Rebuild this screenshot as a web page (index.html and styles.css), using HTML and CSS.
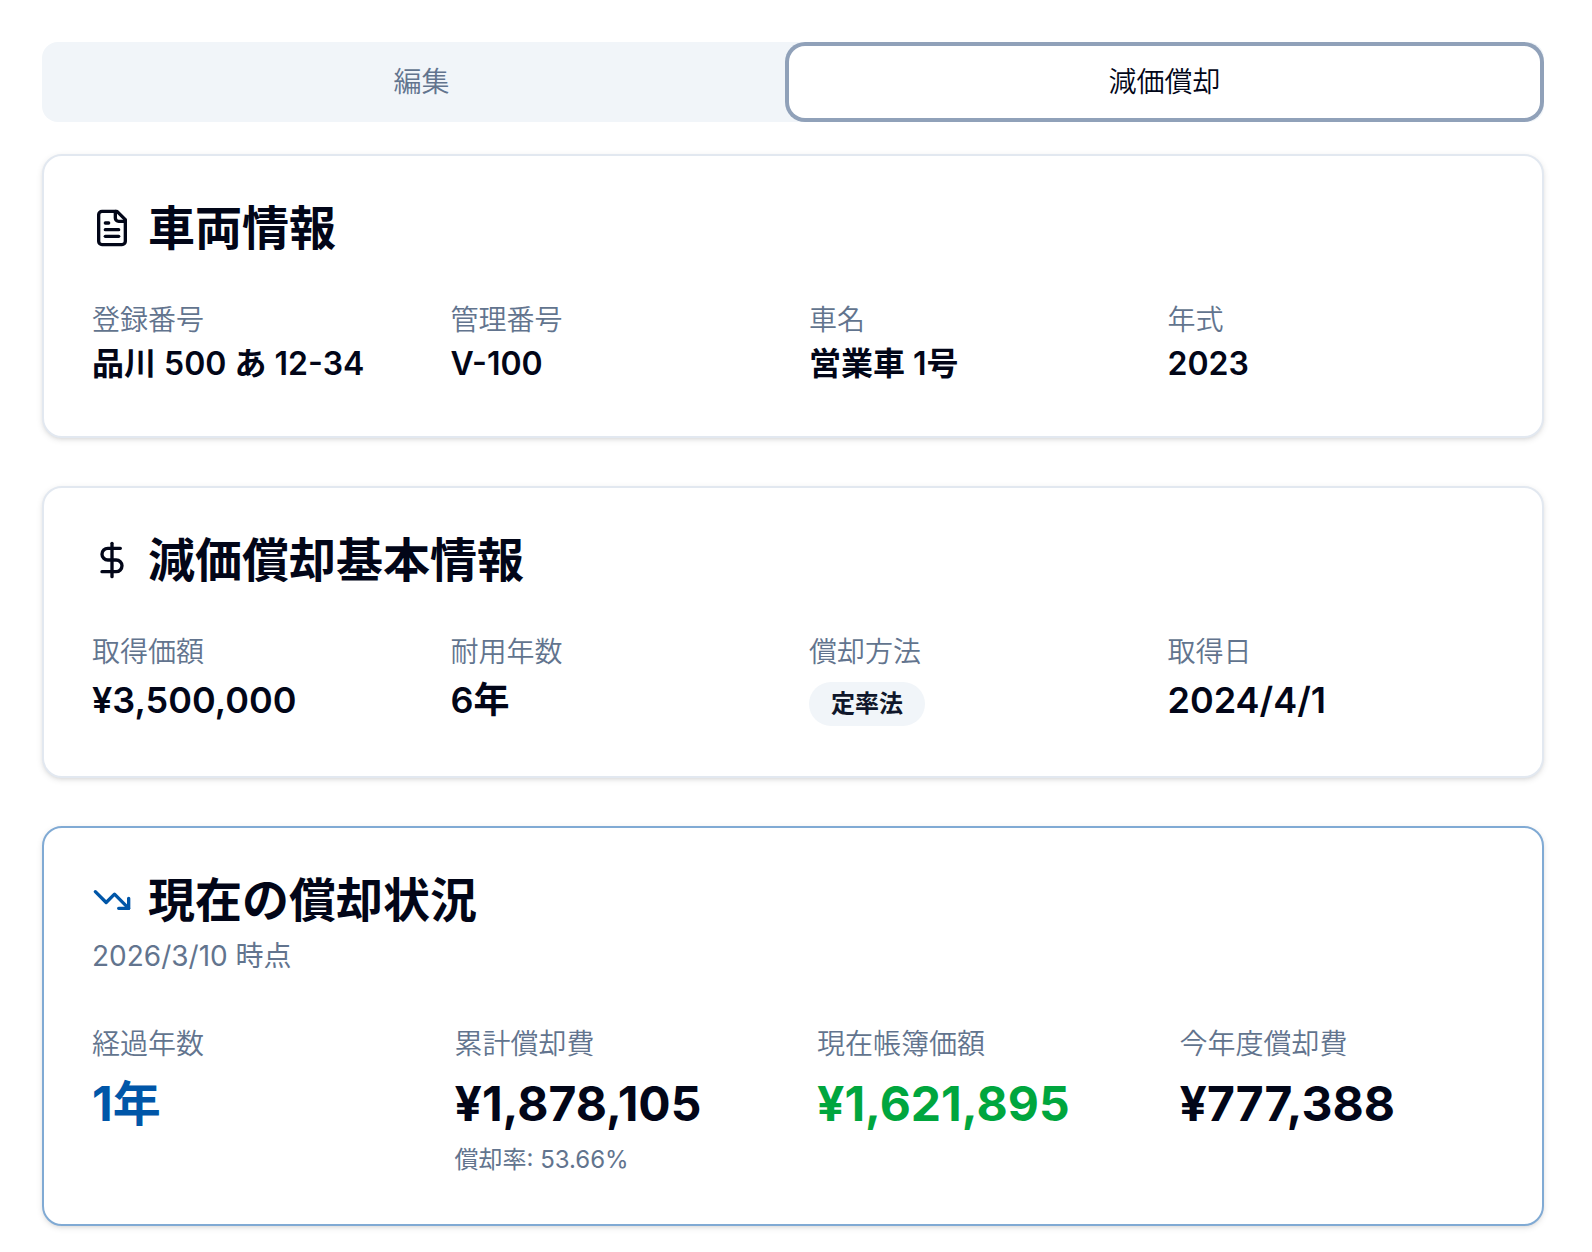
FILE: index.html
```html
<!DOCTYPE html>
<html lang="ja">
<head>
    <meta charset="UTF-8">
    <meta name="viewport" content="width=device-width, initial-scale=1.0">
    <title>減価償却</title>
    <link rel="stylesheet" href="styles.css">
</head>
<body>
    <div class="tabs" role="tablist">
        <button type="button" class="tab" role="tab" aria-selected="false">編集</button>
        <button type="button" class="tab active" role="tab" aria-selected="true">減価償却</button>
    </div>

    <main class="cards">
        <section class="card">
            <h2 class="card-title">
                <svg class="icon" viewBox="0 0 24 24" aria-hidden="true">
                    <path d="M15 2H6a2 2 0 0 0-2 2v16a2 2 0 0 0 2 2h12a2 2 0 0 0 2-2V7Z"/>
                    <path d="M14 2v4a2 2 0 0 0 2 2h4"/>
                    <path d="M10 9H8"/>
                    <path d="M16 13H8"/>
                    <path d="M16 17H8"/>
                </svg>
                車両情報
            </h2>
            <dl class="fields">
                <div>
                    <dt>登録番号</dt>
                    <dd>品川 500 あ 12-34</dd>
                </div>
                <div>
                    <dt>管理番号</dt>
                    <dd>V-100</dd>
                </div>
                <div>
                    <dt>車名</dt>
                    <dd>営業車 1号</dd>
                </div>
                <div>
                    <dt>年式</dt>
                    <dd>2023</dd>
                </div>
            </dl>
        </section>

        <section class="card">
            <h2 class="card-title">
                <svg class="icon" viewBox="0 0 24 24" aria-hidden="true">
                    <path d="M12 2v20"/>
                    <path d="M17 5H9.5a3.5 3.5 0 0 0 0 7h5a3.5 3.5 0 0 1 0 7H6"/>
                </svg>
                減価償却基本情報
            </h2>
            <dl class="fields medium">
                <div>
                    <dt>取得価額</dt>
                    <dd>¥3,500,000</dd>
                </div>
                <div>
                    <dt>耐用年数</dt>
                    <dd>6年</dd>
                </div>
                <div>
                    <dt>償却方法</dt>
                    <dd class="badge-row"><span class="badge">定率法</span></dd>
                </div>
                <div>
                    <dt>取得日</dt>
                    <dd>2024/4/1</dd>
                </div>
            </dl>
        </section>

        <section class="card primary">
            <h2 class="card-title">
                <svg class="icon" viewBox="0 0 24 24" aria-hidden="true">
                    <path d="M16 17h6v-6"/>
                    <path d="m22 17-8.500-8.500-5 5L2 7"/>
                </svg>
                現在の償却状況
            </h2>
            <p class="card-description">2026/3/10 時点</p>
            <dl class="fields large">
                <div>
                    <dt>経過年数</dt>
                    <dd class="blue">1年</dd>
                </div>
                <div>
                    <dt>累計償却費</dt>
                    <dd>¥1,878,105</dd>
                    <dd class="note">償却率: 53.66%</dd>
                </div>
                <div>
                    <dt>現在帳簿価額</dt>
                    <dd class="green">¥1,621,895</dd>
                </div>
                <div>
                    <dt>今年度償却費</dt>
                    <dd>¥777,388</dd>
                </div>
            </dl>
        </section>
    </main>
</body>
</html>
```

FILE: styles.css
```css
* {
    box-sizing: border-box;
}

body {
    margin: 0;
    padding: 42px 48px 26px 42px;
    font-family: Inter, "Noto Sans CJK JP", sans-serif;
    font-size: 28px;
    line-height: 40px;
    color: #020618;
    background-color: #fff;
}

h2, p, dl, dd {
    margin: 0;
}

.tabs {
    display: grid;
    grid-template-columns: 1fr 1fr;
    padding: 8px;
    margin-bottom: 32px;
    border-radius: 16px;
    background-color: #f1f5f9;
}

.tab {
    height: 64px;
    padding: 12px 24px;
    border: none;
    border-radius: 12px;
    background: none;
    font-family: inherit;
    font-size: 28px;
    font-weight: 350;
    line-height: 40px;
    color: #62748e;
    cursor: pointer;
}

.tab.active {
    background-color: #fff;
    color: #020618;
    box-shadow: 0 0 0 4px #fff, 0 0 0 8px #90a1b9;
}

.cards {
    display: grid;
    gap: 48px;
}

.card {
    padding: 48px;
    border: 2px solid #e2e8f0;
    border-radius: 20px;
    background-color: #fff;
    box-shadow: 0 2px 6px rgba(0, 0, 0, 0.1), 0 2px 4px -2px rgba(0, 0, 0, 0.1);
}

.card.primary {
    border-color: #80aad4;
}

.card-title {
    display: flex;
    align-items: center;
    gap: 16px;
    font-size: 47px;
    font-weight: 600;
    line-height: 48px;
}

.icon {
    width: 40px;
    height: 40px;
    fill: none;
    stroke: currentColor;
    stroke-width: 2;
    stroke-linecap: round;
    stroke-linejoin: round;
}

.primary .icon, .blue {
    color: #0056a8;
}

.green {
    color: #00a63e;
}

.card-description {
    margin-top: 12px;
    font-weight: 400;
    color: #62748e;
}

.fields {
    display: grid;
    grid-template-columns: repeat(4, 1fr);
    gap: 32px;
    margin-top: 48px;
}

dt {
    font-weight: 350;
    color: #62748e;
}

dd {
    font-size: 32px;
    font-weight: 600;
    line-height: 48px;
}

.medium dd {
    font-size: 36px;
    line-height: 56px;
}

.medium .badge-row {
    display: flex;
    padding-top: 10px;
}

.badge {
    padding: 6px 22px;
    border-radius: 22px;
    background-color: #f1f5f9;
    font-size: 24px;
    line-height: 32px;
    color: #0f172b;
}

.large {
    gap: 48px;
}

.large dd {
    margin-top: 8px;
    font-size: 48px;
    font-weight: 700;
    line-height: 64px;
}

.large .note {
    font-size: 24px;
    font-weight: 400;
    line-height: 32px;
    color: #62748e;
}
```
